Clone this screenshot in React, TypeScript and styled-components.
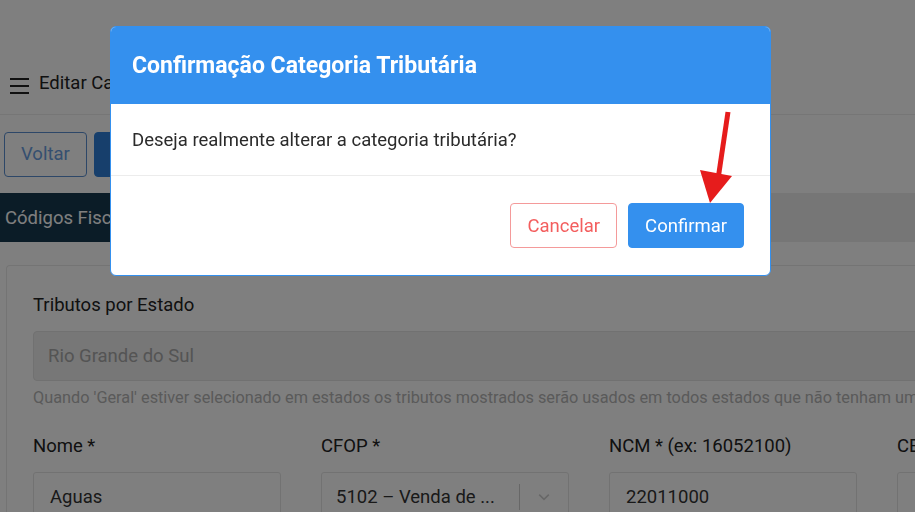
import styled, { createGlobalStyle } from 'styled-components'

const GlobalStyle = createGlobalStyle`
  html, body { margin: 0; padding: 0; }
  body {
    font-family: Roboto, "Liberation Sans", Arial, sans-serif;
    background: #ffffff;
    color: #212529;
    overflow: hidden;
  }
  * { box-sizing: border-box; }
`

// page behind the modal
const Page = styled.div`
  width: 915px;
  height: 512px;
  overflow: hidden;
  background: #ffffff;
`

const Header = styled.header`
  height: 115px;
  display: flex;
  align-items: flex-end;
  gap: 10px;
  padding: 0 0 20px 10px;
  border-bottom: 1px solid #ececec;
  font-size: 18.5px;
  color: #222;
`

const Toolbar = styled.div`
  height: 78px;
  display: flex;
  align-items: center;
  gap: 7px;
  padding: 0 4px;
`

const ToolButton = styled.button<{ $filled?: boolean }>`
  height: 45px;
  padding: 0 16px;
  font-family: inherit;
  font-size: 18.5px;
  border-radius: 4px;
  border: 1px solid ${(p) => (p.$filled ? '#2f7fd8' : '#5b8fd0')};
  background: ${(p) => (p.$filled ? '#2f7fd8' : '#ffffff')};
  color: ${(p) => (p.$filled ? '#ffffff' : '#6a9ee0')};
`

const TabBar = styled.div`
  height: 49px;
  display: flex;
  background: #ececec;
`

const Tab = styled.div<{ $active?: boolean }>`
  display: flex;
  align-items: center;
  padding: 0 18px 0 5px;
  font-size: 18.5px;
  background: ${(p) => (p.$active ? '#16384f' : 'transparent')};
  color: ${(p) => (p.$active ? '#ffffff' : '#333')};
`

const Content = styled.div`
  padding: 23px 0 0 6px;
`

const Card = styled.div`
  border: 1px solid #e8e8e8;
  border-right: none;
  border-radius: 4px 0 0 0;
  padding: 27px 0 0 26px;
  width: 940px;
`

const Label = styled.div`
  font-size: 18.5px;
  color: #222;
  line-height: 24px;
  margin-bottom: 14px;
`

const DisabledSelect = styled.div`
  height: 50px;
  display: flex;
  align-items: center;
  padding: 0 14px;
  background: #eeeeee;
  border: 1px solid #e2e2e2;
  border-radius: 4px;
  font-size: 18.5px;
  color: #a8a8a8;
`

const Help = styled.div`
  font-size: 16.3px;
  color: #b4b4b4;
  margin: 7px 0 27px;
  white-space: nowrap;
`

const FieldRow = styled.div`
  display: grid;
  grid-template-columns: repeat(4, 248px);
  column-gap: 40px;
`

const Field = styled.div`
  display: flex;
  flex-direction: column;
`

const Input = styled.div`
  height: 50px;
  display: flex;
  align-items: center;
  padding: 0 16px;
  border: 1px solid #e4e4e4;
  border-radius: 3px;
  font-size: 18.5px;
  color: #333;
`

const SelectBox = styled(Input)`
  padding: 0 0 0 14px;
  justify-content: space-between;
`

const SelectControls = styled.div`
  display: flex;
  align-items: center;
  height: 100%;
`

const Separator = styled.span`
  width: 1px;
  height: 26px;
  background: #cfcfcf;
`

const Chevron = styled.span`
  width: 48px;
  display: flex;
  justify-content: center;
  color: #cfcfcf;
`

// modal layer
const Overlay = styled.div`
  position: fixed;
  inset: 0;
  background: rgba(0, 0, 0, 0.5);
  padding: 26px 0 0 110px;
`

const Modal = styled.div`
  width: 661px;
  height: 250px;
  background: #ffffff;
  border: 1px solid #3490ee;
  border-radius: 6px;
  overflow: hidden;
  display: flex;
  flex-direction: column;
`

const ModalHeader = styled.div`
  height: 77px;
  background: #3490ee;
  color: #ffffff;
  display: flex;
  align-items: center;
  padding: 0 21px;
  font-size: 23px;
  font-weight: 700;
`

const ModalBody = styled.div`
  height: 72px;
  display: flex;
  align-items: center;
  padding: 0 21px;
  font-size: 18.5px;
  color: #2b2b2b;
  border-bottom: 1px solid #ececec;
`

const ModalFooter = styled.div`
  flex: 1;
  display: flex;
  justify-content: flex-end;
  align-items: flex-start;
  gap: 11px;
  padding: 27px 26px 0 0;
`

const ModalButton = styled.button<{ $primary?: boolean }>`
  height: 45px;
  padding: 0 16px;
  font-family: inherit;
  font-size: 18.5px;
  border-radius: 4px;
  border: 1px solid ${(p) => (p.$primary ? '#3490ee' : '#f49a9a')};
  background: ${(p) => (p.$primary ? '#3490ee' : '#ffffff')};
  color: ${(p) => (p.$primary ? '#ffffff' : '#f35e5e')};
`

const ArrowLayer = styled.svg`
  position: fixed;
  left: 0;
  top: 0;
  pointer-events: none;
`

const Hamburger = () => (
  <svg width="19" height="16" viewBox="0 0 19 16">
    <path d="M0 1h19M0 8h19M0 15h19" stroke="#222" strokeWidth="2" />
  </svg>
)

export default function App() {
  return (
    <>
      <GlobalStyle />
      <Page>
        <Header>
          <Hamburger />
          <span>Editar Categoria Tributária</span>
        </Header>
        <Toolbar>
          <ToolButton>Voltar</ToolButton>
          <ToolButton $filled>Salvar</ToolButton>
        </Toolbar>
        <TabBar>
          <Tab $active>Códigos Fiscais</Tab>
        </TabBar>
        <Content>
          <Card>
            <Label>Tributos por Estado</Label>
            <DisabledSelect>Rio Grande do Sul</DisabledSelect>
            <Help>
              Quando 'Geral' estiver selecionado em estados os tributos mostrados serão usados em todos estados que não tenham um
              tributo específico
            </Help>
            <FieldRow>
              <Field>
                <Label>Nome *</Label>
                <Input>Aguas</Input>
              </Field>
              <Field>
                <Label>CFOP *</Label>
                <SelectBox>
                  <span>5102 – Venda de ...</span>
                  <SelectControls>
                    <Separator />
                    <Chevron>
                      <svg width="16" height="16" viewBox="0 0 20 20">
                        <path d="M4 7l6 6 6-6" fill="none" stroke="currentColor" strokeWidth="2" />
                      </svg>
                    </Chevron>
                  </SelectControls>
                </SelectBox>
              </Field>
              <Field>
                <Label>NCM * (ex: 16052100)</Label>
                <Input>22011000</Input>
              </Field>
              <Field>
                <Label>CEST</Label>
                <Input />
              </Field>
            </FieldRow>
          </Card>
        </Content>
      </Page>
      <Overlay>
        <Modal>
          <ModalHeader>Confirmação Categoria Tributária</ModalHeader>
          <ModalBody>Deseja realmente alterar a categoria tributária?</ModalBody>
          <ModalFooter>
            <ModalButton>Cancelar</ModalButton>
            <ModalButton $primary>Confirmar</ModalButton>
          </ModalFooter>
        </Modal>
      </Overlay>
      <ArrowLayer width="915" height="512">
        <path d="M728 112L718.5 176" stroke="#e61c1c" strokeWidth="5" />
        <polygon points="700,170 732,176 710,203" fill="#e61c1c" />
      </ArrowLayer>
    </>
  )
}
